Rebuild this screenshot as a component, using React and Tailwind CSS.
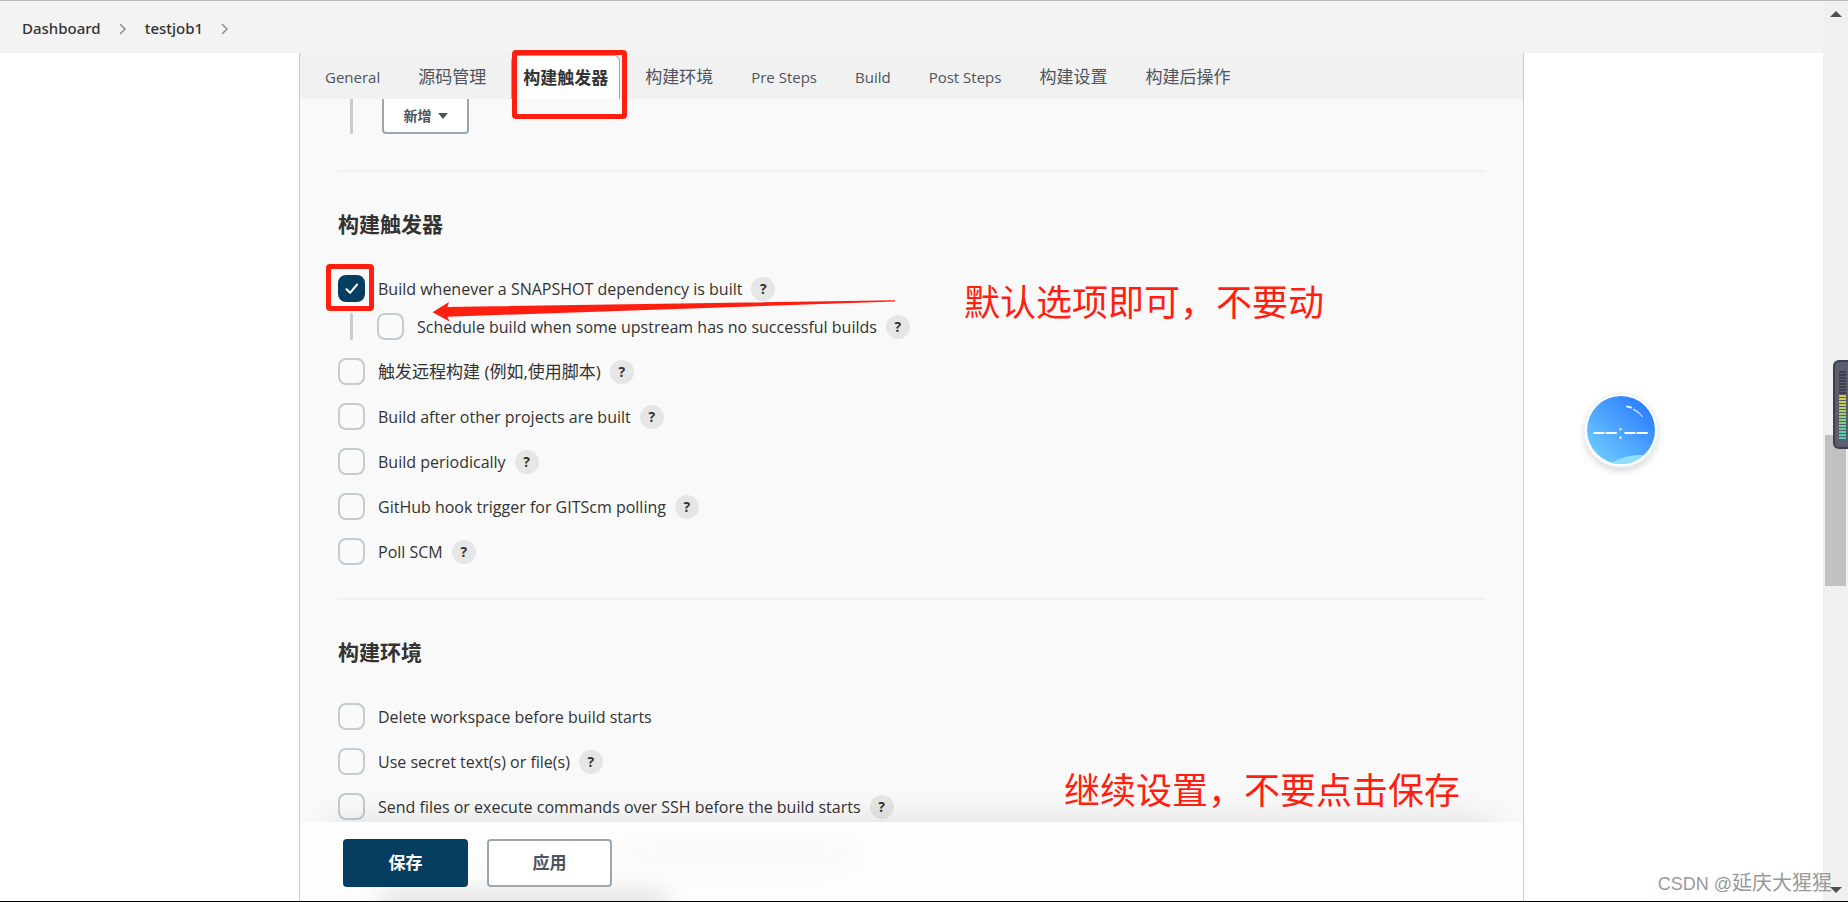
import { useState } from "react";

const tabs = [
  { name: "General", latin: true },
  { name: "源码管理" },
  { name: "构建触发器" },
  { name: "构建环境" },
  { name: "Pre Steps", latin: true },
  { name: "Build", latin: true },
  { name: "Post Steps", latin: true },
  { name: "构建设置" },
  { name: "构建后操作" },
];

const triggers = [
  { id: "remote", label: "触发远程构建 (例如,使用脚本)", help: true, cjk: true },
  { id: "after-projects", label: "Build after other projects are built", help: true },
  { id: "periodically", label: "Build periodically", help: true },
  { id: "github-hook", label: "GitHub hook trigger for GITScm polling", help: true },
  { id: "poll-scm", label: "Poll SCM", help: true },
];

const environment = [
  { id: "delete-workspace", label: "Delete workspace before build starts" },
  { id: "secret-text", label: "Use secret text(s) or file(s)", help: true },
  {
    id: "ssh-before",
    label: "Send files or execute commands over SSH before the build starts",
    help: true,
  },
];

const meterDark = [0, 1, 2, 3, 4, 5, 6, 7];
const meterColors = [
  "#d8c84a", "#d3ca50", "#c9cc57", "#bfcd5e", "#b3ce66", "#a9cf6d", "#9ed074", "#93d07b",
  "#88d083", "#7dd08a", "#72d092", "#67cf9a", "#5dcfa2", "#55cfaa", "#50cfb2",
];

function Chevron() {
  return (
    <svg width="8" height="12" viewBox="0 0 8 12" fill="none" stroke="#8f8f8f" strokeWidth="1.5">
      <path d="M1 1l5 5-5 5" />
    </svg>
  );
}

function OptionRow({ option, checked, onChange }) {
  return (
    <div className="flex h-[27px] items-center">
      <span className="relative flex shrink-0">
        <input
          id={option.id}
          type="checkbox"
          checked={checked}
          onChange={() => onChange(option.id)}
          className="size-[27px] appearance-none rounded-lg border-2 border-[#c3ccd1] bg-[#fafafa] checked:border-[#063e61] checked:bg-[#063e61]"
        />
        {checked && (
          <svg
            className="pointer-events-none absolute inset-0"
            width="27"
            height="27"
            viewBox="0 0 27 27"
            fill="none"
            stroke="#fff"
            strokeWidth="2"
            strokeLinecap="round"
            strokeLinejoin="round"
          >
            <path d="M8.500 14.200l3.600 3.600 7-8.300" />
          </svg>
        )}
      </span>
      <label
        htmlFor={option.id}
        className={
          option.cjk
            ? "ml-[13px] text-[17px] whitespace-nowrap font-normal"
            : "ml-[13px] text-base whitespace-nowrap font-medium"
        }
      >
        {option.label}
      </label>
      {option.help && (
        <button
          type="button"
          aria-label={"Help for " + option.label}
          className="ml-[9px] flex size-6 shrink-0 items-center justify-center rounded-full bg-[#e6e6e6] text-sm font-bold text-[#333]"
        >
          ?
        </button>
      )}
    </div>
  );
}

function SectionTitle({ children }) {
  return <h2 className="text-[21px] leading-7 font-bold text-[#333]">{children}</h2>;
}

function Annotations() {
  return (
    <div className="pointer-events-none absolute inset-0 text-[#ff1e10]">
      <div className="absolute top-[-3px] left-[212px] h-[69px] w-[115px] rounded border-5 border-[#ff1e10]" />
      <div className="absolute top-[211px] left-[26px] h-[47px] w-12 rounded border-5 border-[#ff1e10]" />
      <svg className="absolute top-[247px] left-[132px]" width="464" height="22" viewBox="0 0 464 22">
        <path d="M0.500 12.300L17 2l-1.600 5L463 0.300v1.200L15.400 16.700l2.200 4.800z" fill="#ff1e10" />
      </svg>
      <p className="absolute top-[223px] left-[664px] text-4xl leading-[54px] whitespace-nowrap">
        默认选项即可，不要动
      </p>
      <p className="absolute top-[711px] left-[764px] text-4xl leading-[54px] whitespace-nowrap">
        继续设置，不要点击保存
      </p>
    </div>
  );
}

function ClockBubble() {
  return (
    <svg className="absolute top-[385px] right-[177px]" width="100" height="100" viewBox="0 0 100 100">
      <defs>
        <linearGradient id="bubble" x1="0.15" y1="0.9" x2="0.85" y2="0.15">
          <stop offset="0" stopColor="#6cc8ff" />
          <stop offset="1" stopColor="#2f80ff" />
        </linearGradient>
        <clipPath id="bubble-clip">
          <circle cx="50" cy="45" r="34" />
        </clipPath>
        <filter id="bubble-shadow" x="-20%" y="-20%" width="140%" height="150%">
          <feDropShadow dx="0" dy="4" stdDeviation="3" floodColor="#000" floodOpacity="0.14" />
        </filter>
      </defs>
      <circle cx="50" cy="45" r="37" fill="#fff" stroke="#e1eefa" filter="url(#bubble-shadow)" />
      <circle cx="50" cy="45" r="34" fill="url(#bubble)" />
      <path d="M37 78c12-3 18-9 36-8v12H37z" fill="#8fe0ff" clipPath="url(#bubble-clip)" />
      <path d="M56 21.500l4 1" stroke="#e4f1ff" strokeWidth="2" strokeLinecap="round" />
      <path d="M62.500 24c4 1.500 7 4.500 9 8-2.500-3-5.500-5.500-9-7z" fill="#d5e8ff" stroke="#d5e8ff" strokeWidth="0.6" />
      <path d="M22.500 48h11M34.700 48h11M53.500 48h11M65.700 48h11" stroke="#fff" strokeWidth="2" />
      <path d="M48.500 44.200h2M48.500 52.400h2" stroke="#fff" strokeWidth="2" />
    </svg>
  );
}

function Scrollbar() {
  return (
    <div className="flex w-[25px] shrink-0 flex-col items-center justify-between border-t border-[#bbb] bg-[#f0f0f0] pt-[10px] pb-2">
      <svg width="12" height="6" viewBox="0 0 12 6">
        <path d="M6 0l6 6H0z" fill="#505050" />
      </svg>
      <div className="flex w-full flex-1 flex-col px-[2px]">
        <div className="basis-[418px]" />
        <div className="h-[151px] bg-[#c1c1c1]" />
      </div>
      <svg width="12" height="6" viewBox="0 0 12 6">
        <path d="M0 0h12L6 6z" fill="#505050" />
      </svg>
    </div>
  );
}

function LevelMeter() {
  return (
    <div className="absolute top-[360px] right-0 flex h-[89px] w-[15px] flex-col gap-px rounded-l-md border-2 border-r-0 border-[#3d404c] bg-[#5a5e6e] pt-[9px] pl-1">
      {meterDark.map((n) => (
        <span key={n} className="h-[2px] w-[7px] shrink-0 bg-[#3d404c]" />
      ))}
      {meterColors.map((color) => (
        <span key={color} className="h-[2px] w-[7px] shrink-0" style={{ backgroundColor: color }} />
      ))}
    </div>
  );
}

export default function App() {
  const [activeTab, setActiveTab] = useState("构建触发器");
  const [selected, setSelected] = useState({ snapshot: true });

  const toggle = (id) => setSelected((prev) => ({ ...prev, [id]: !prev[id] }));

  return (
    <div className="relative flex h-screen overflow-hidden border-b border-black bg-white font-['Open_Sans','Noto_Sans_CJK_SC',sans-serif] text-base text-[#333]">
      <div className="flex min-w-0 flex-1 flex-col">
        <header className="h-[53px] shrink-0 border-t border-[#bbb] bg-[#f3f3f3]">
          <nav className="flex h-full items-center gap-[18px] px-[22px] pt-[3px] font-['Noto_Sans',sans-serif] text-[15px] font-medium">
            <a href="#dashboard">Dashboard</a>
            <Chevron />
            <a href="#testjob1">testjob1</a>
            <Chevron />
          </nav>
        </header>

        <main className="relative mx-auto flex min-h-0 w-full max-w-[1225px] flex-1 flex-col border-x border-[#c3ccd1] bg-[#f9f9f9]">
          <div className="flex h-[46px] shrink-0 items-end gap-3 bg-[#f1f1f1] px-3">
            {tabs.map((tab) => (
              <button
                key={tab.name}
                type="button"
                onClick={() => setActiveTab(tab.name)}
                className={
                  tab.name === activeTab
                    ? "h-11 rounded-t-md border border-b-0 border-[#9aa7b0] bg-white px-[11px] text-[17px] font-bold whitespace-nowrap text-[#333]"
                    : tab.latin
                      ? "h-11 px-[13px] text-[15px] whitespace-nowrap text-[#4d545d]"
                      : "h-11 px-[13px] text-[17px] whitespace-nowrap text-[#4d545d]"
                }
              >
                {tab.name}
              </button>
            ))}
          </div>

          <div className="min-h-0 flex-1 overflow-hidden px-[38px]">
            <div className="flex h-[35px] items-end pl-3">
              <span className="h-full w-[3px] rounded-b bg-[#c3ccd1]" />
              <button
                type="button"
                className="ml-[29px] flex h-10 w-[87px] shrink-0 items-center justify-center gap-[6px] rounded border-2 border-[#9aa7b0] bg-white pt-1 text-sm font-bold text-[#4d545d]"
              >
                新增
                <svg width="10" height="6" viewBox="0 0 10 6">
                  <path d="M0 0h10L5 6z" fill="#4d545d" />
                </svg>
              </button>
            </div>

            <section className="mt-9 border-t-2 border-[#f1f1f1] pt-[38px]">
              <SectionTitle>构建触发器</SectionTitle>
              <div className="mt-[37px] flex flex-col gap-[18px]">
                <div>
                  <OptionRow
                    option={{ id: "snapshot", label: "Build whenever a SNAPSHOT dependency is built", help: true }}
                    checked={!!selected.snapshot}
                    onChange={toggle}
                  />
                  <div className="mt-[11px] ml-3 flex">
                    <span className="mr-6 w-[3px] shrink-0 rounded bg-[#c3ccd1]" />
                    <OptionRow
                      option={{
                        id: "upstream",
                        label: "Schedule build when some upstream has no successful builds",
                        help: true,
                      }}
                      checked={!!selected.upstream}
                      onChange={toggle}
                    />
                  </div>
                </div>
                {triggers.map((option) => (
                  <OptionRow key={option.id} option={option} checked={!!selected[option.id]} onChange={toggle} />
                ))}
              </div>
            </section>

            <section className="mt-[33px] border-t-2 border-[#f1f1f1] pt-[38px]">
              <SectionTitle>构建环境</SectionTitle>
              <div className="mt-[37px] flex flex-col gap-[18px]">
                {environment.map((option) => (
                  <OptionRow key={option.id} option={option} checked={!!selected[option.id]} onChange={toggle} />
                ))}
              </div>
            </section>
          </div>

          <footer className="relative shrink-0 bg-[#fdfdfd]">
            <div className="pointer-events-none absolute inset-x-0 bottom-full h-9 overflow-hidden">
              <div className="absolute inset-x-8 top-9 h-9 shadow-[0_0_32px_rgba(0,0,0,0.12)]" />
            </div>
            <div className="pointer-events-none absolute inset-0 overflow-hidden">
              <div className="absolute top-5 left-[320px] h-6 w-60 rounded-full bg-[#f9f9f9] blur-md" />
              <div className="absolute bottom-[-10px] left-20 h-4 w-72 rounded-full bg-[#d5d5d5] blur-md" />
            </div>
            <div className="relative flex gap-[19px] px-[43px] pt-[17px] pb-[14px]">
              <button
                type="button"
                className="h-12 w-[125px] rounded bg-[#063e61] text-[17px] font-bold text-white"
              >
                保存
              </button>
              <button
                type="button"
                className="h-12 w-[125px] rounded border-2 border-[#9aa7b0] bg-white text-[17px] font-bold text-[#4d545d]"
              >
                应用
              </button>
            </div>
          </footer>

          <Annotations />
        </main>
      </div>

      <Scrollbar />
      <ClockBubble />
      <LevelMeter />
      <p className="pointer-events-none absolute right-4 bottom-[3px] font-['Liberation_Sans','Noto_Sans_CJK_SC',sans-serif] text-xl leading-7 text-[#999]">
        <span className="text-lg">CSDN @</span>延庆大猩猩
      </p>
    </div>
  );
}
